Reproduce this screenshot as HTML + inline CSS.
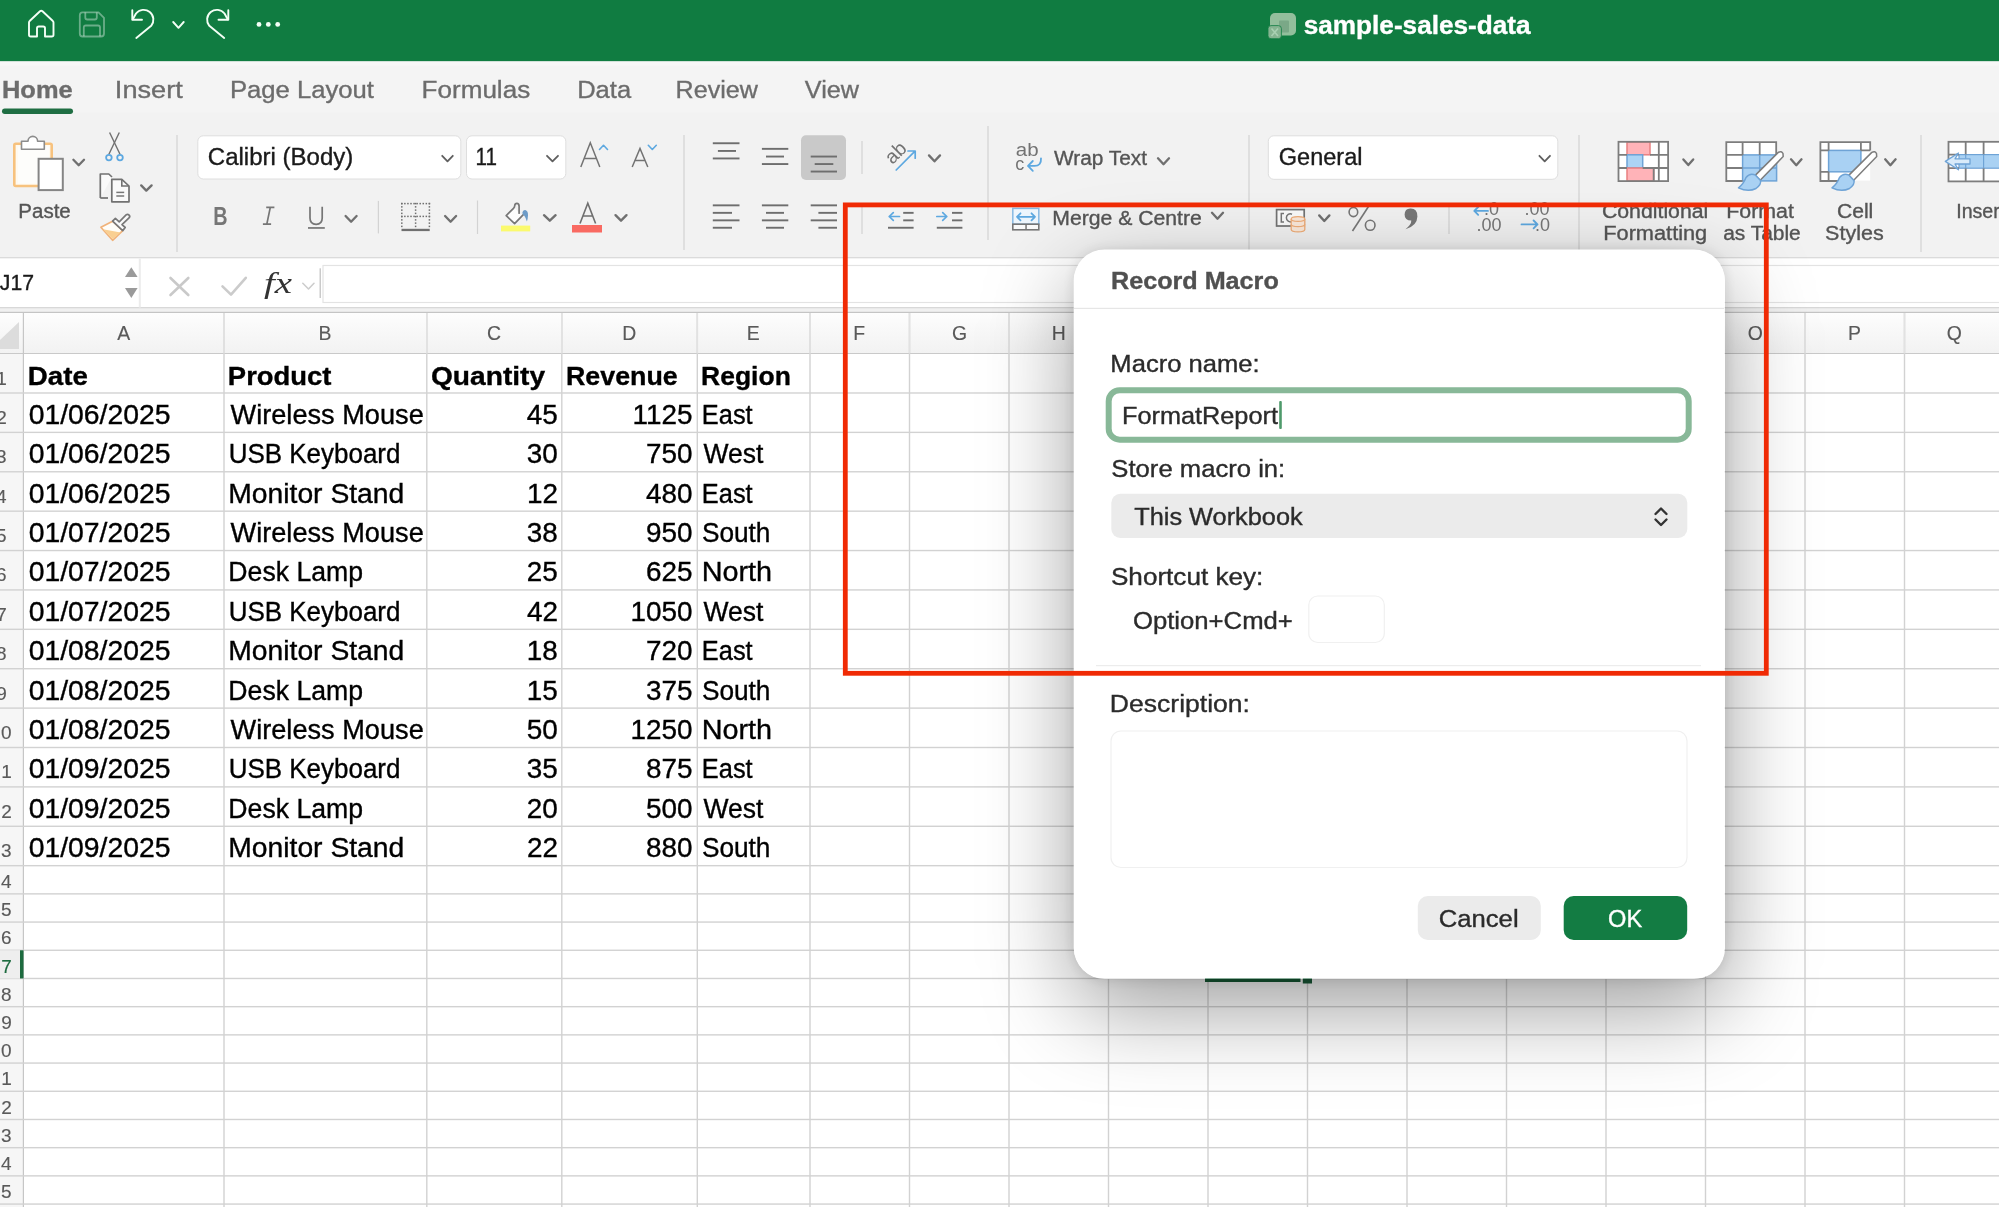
<!DOCTYPE html>
<html><head><meta charset="utf-8"><title>Record Macro</title>
<style>
html,body{margin:0;padding:0;width:1999px;height:1207px;overflow:hidden;background:#fff;font-family:"Liberation Sans",sans-serif;}
svg{position:absolute;left:0;top:0;will-change:transform;}
#shadow{position:absolute;left:1073.7px;top:249.5px;width:651px;height:729px;border-radius:31px;box-shadow:0 30px 90px rgba(0,0,0,0.38),0 0 14px rgba(0,0,0,0.12);}
#red{position:absolute;left:843px;top:203px;width:917.5px;height:464.5px;border:4.5px solid #ef2a0c;}
</style></head><body>
<svg width="1999" height="1207" viewBox="0 0 1999 1207">
<rect x="0" y="0" width="1999" height="61.8" fill="#107c41"/>
<rect x="0" y="61.5" width="1999" height="196.5" fill="#f2f2f2"/>
<rect x="0" y="61.5" width="1999" height="51" fill="#f4f4f4"/>
<rect x="0" y="61.8" width="1999" height="4" fill="#f7f7f7"/>
<rect x="0" y="257.3" width="1999" height="1.2" fill="#d2d2d2"/>
<rect x="0" y="258.5" width="1999" height="49" fill="#ffffff"/>
<rect x="0" y="307.3" width="1999" height="1.2" fill="#c8c8c8"/>
<rect x="0" y="308.5" width="1999" height="3.5" fill="#f0f0f0"/>
<rect x="0" y="311.8" width="1999" height="1.2" fill="#c4c4c4"/>
<defs><linearGradient id="hg" x1="0" y1="0" x2="0" y2="1"><stop offset="0" stop-color="#fdfdfd"/><stop offset="1" stop-color="#f2f2f2"/></linearGradient></defs>
<rect x="0" y="313" width="1999" height="40.3" fill="url(#hg)"/>
<rect x="0" y="353" width="1999" height="1.1" fill="#c9c9c9"/>
<rect x="23.5" y="354" width="1999" height="1207" fill="#ffffff"/>
<rect x="0" y="354" width="23.5" height="1207" fill="#f6f6f6"/>
<rect x="223.30" y="313" width="1.4" height="1207" fill="#d2d2d2"/>
<rect x="426.10" y="313" width="1.4" height="1207" fill="#d2d2d2"/>
<rect x="561.10" y="313" width="1.4" height="1207" fill="#d2d2d2"/>
<rect x="696.60" y="313" width="1.4" height="1207" fill="#d2d2d2"/>
<rect x="809.30" y="313" width="1.4" height="1207" fill="#d2d2d2"/>
<rect x="908.80" y="313" width="1.4" height="1207" fill="#d2d2d2"/>
<rect x="1008.30" y="313" width="1.4" height="1207" fill="#d2d2d2"/>
<rect x="1107.80" y="313" width="1.4" height="1207" fill="#d2d2d2"/>
<rect x="1207.30" y="313" width="1.4" height="1207" fill="#d2d2d2"/>
<rect x="1306.80" y="313" width="1.4" height="1207" fill="#d2d2d2"/>
<rect x="1406.30" y="313" width="1.4" height="1207" fill="#d2d2d2"/>
<rect x="1505.80" y="313" width="1.4" height="1207" fill="#d2d2d2"/>
<rect x="1605.30" y="313" width="1.4" height="1207" fill="#d2d2d2"/>
<rect x="1704.80" y="313" width="1.4" height="1207" fill="#d2d2d2"/>
<rect x="1804.30" y="313" width="1.4" height="1207" fill="#d2d2d2"/>
<rect x="1903.80" y="313" width="1.4" height="1207" fill="#d2d2d2"/>
<rect x="223.20" y="313" width="1.6" height="40.3" fill="#e2e2e2"/>
<rect x="426.00" y="313" width="1.6" height="40.3" fill="#e2e2e2"/>
<rect x="561.00" y="313" width="1.6" height="40.3" fill="#e2e2e2"/>
<rect x="696.50" y="313" width="1.6" height="40.3" fill="#e2e2e2"/>
<rect x="809.20" y="313" width="1.6" height="40.3" fill="#e2e2e2"/>
<rect x="908.70" y="313" width="1.6" height="40.3" fill="#e2e2e2"/>
<rect x="1008.20" y="313" width="1.6" height="40.3" fill="#e2e2e2"/>
<rect x="1107.70" y="313" width="1.6" height="40.3" fill="#e2e2e2"/>
<rect x="1207.20" y="313" width="1.6" height="40.3" fill="#e2e2e2"/>
<rect x="1306.70" y="313" width="1.6" height="40.3" fill="#e2e2e2"/>
<rect x="1406.20" y="313" width="1.6" height="40.3" fill="#e2e2e2"/>
<rect x="1505.70" y="313" width="1.6" height="40.3" fill="#e2e2e2"/>
<rect x="1605.20" y="313" width="1.6" height="40.3" fill="#e2e2e2"/>
<rect x="1704.70" y="313" width="1.6" height="40.3" fill="#e2e2e2"/>
<rect x="1804.20" y="313" width="1.6" height="40.3" fill="#e2e2e2"/>
<rect x="1903.70" y="313" width="1.6" height="40.3" fill="#e2e2e2"/>
<rect x="22.8" y="313" width="1.2" height="1207" fill="#c6c6c6"/>
<rect x="0" y="392.29" width="1999" height="1.4" fill="#d2d2d2"/>
<rect x="0" y="431.68" width="1999" height="1.4" fill="#d2d2d2"/>
<rect x="0" y="471.07" width="1999" height="1.4" fill="#d2d2d2"/>
<rect x="0" y="510.46" width="1999" height="1.4" fill="#d2d2d2"/>
<rect x="0" y="549.85" width="1999" height="1.4" fill="#d2d2d2"/>
<rect x="0" y="589.24" width="1999" height="1.4" fill="#d2d2d2"/>
<rect x="0" y="628.63" width="1999" height="1.4" fill="#d2d2d2"/>
<rect x="0" y="668.02" width="1999" height="1.4" fill="#d2d2d2"/>
<rect x="0" y="707.41" width="1999" height="1.4" fill="#d2d2d2"/>
<rect x="0" y="746.80" width="1999" height="1.4" fill="#d2d2d2"/>
<rect x="0" y="786.19" width="1999" height="1.4" fill="#d2d2d2"/>
<rect x="0" y="825.58" width="1999" height="1.4" fill="#d2d2d2"/>
<rect x="0" y="864.97" width="1999" height="1.4" fill="#d2d2d2"/>
<rect x="0" y="893.17" width="1999" height="1.4" fill="#d2d2d2"/>
<rect x="0" y="921.37" width="1999" height="1.4" fill="#d2d2d2"/>
<rect x="0" y="949.57" width="1999" height="1.4" fill="#d2d2d2"/>
<rect x="0" y="977.77" width="1999" height="1.4" fill="#d2d2d2"/>
<rect x="0" y="1005.97" width="1999" height="1.4" fill="#d2d2d2"/>
<rect x="0" y="1034.17" width="1999" height="1.4" fill="#d2d2d2"/>
<rect x="0" y="1062.37" width="1999" height="1.4" fill="#d2d2d2"/>
<rect x="0" y="1090.57" width="1999" height="1.4" fill="#d2d2d2"/>
<rect x="0" y="1118.77" width="1999" height="1.4" fill="#d2d2d2"/>
<rect x="0" y="1146.97" width="1999" height="1.4" fill="#d2d2d2"/>
<rect x="0" y="1175.17" width="1999" height="1.4" fill="#d2d2d2"/>
<rect x="0" y="1203.37" width="1999" height="1.4" fill="#d2d2d2"/>
<rect x="0" y="1231.57" width="1999" height="1.4" fill="#d2d2d2"/>
<rect x="0" y="1259.77" width="1999" height="1.4" fill="#d2d2d2"/>
<path d="M19 322 L19 349 L0 349 L0 340 Z" fill="#dcdcdc"/>
<rect x="0" y="950.27" width="23" height="28.20" fill="#eeeeee"/>
<rect x="20" y="950.27" width="3.5" height="28.20" fill="#1d6b3f"/>
<rect x="1205" y="978" width="95.5" height="4" fill="#165c36"/>
<rect x="1302.8" y="978" width="9.2" height="5.5" fill="#1b5e3a"/>
<rect x="2" y="108.5" width="71" height="5.5" rx="2.75" fill="#1f6e43"/>
<path d="M37 36.5 V28.3 Q37 26.5 38.8 26.5 H43.2 Q45 26.5 45 28.3 V36.5 H51.7 Q53.5 36.5 53.5 34.7 V22.6 Q53.5 21.5 52.6 20.7 L42.5 11.2 Q41.25 10.1 40 11.2 L29.9 20.7 Q29 21.5 29 22.6 V34.7 Q29 36.5 30.8 36.5 Z" fill="none" stroke="#f4fff6" stroke-width="1.9" stroke-linejoin="round"/>
<g fill="none" stroke="rgba(255,255,255,0.38)" stroke-width="1.8" stroke-linejoin="round"><path d="M82.5 12.3 H98.5 L104 17.8 V33.5 Q104 36.5 101 36.5 H82.5 Q79.8 36.5 79.8 33.5 V15.3 Q79.8 12.3 82.5 12.3 Z"/><path d="M85.3 12.5 V17.5 Q85.3 19.5 87.3 19.5 H94.8 Q96.8 19.5 96.8 17.5 V12.5"/><path d="M83.8 36.3 V27.5 Q83.8 25.5 85.8 25.5 H98 Q100 25.5 100 27.5 V36.3"/></g>
<g fill="none" stroke="#f4fff6" stroke-width="1.9" stroke-linecap="round" stroke-linejoin="round"><path d="M136.3 38 L151.2 25.8 A9.3 9.3 0 1 0 136 13.5 L132.8 19.2"/><path d="M132.3 10.2 V19.7 H142"/><path d="M173.2 22 L178.5 27.8 L183.7 22"/><path d="M224.2 38 L209.3 25.8 A9.3 9.3 0 1 1 224.5 13.5 L227.7 19.2"/><path d="M228.3 10.2 V19.7 H218.5"/></g>
<circle cx="259" cy="24.4" r="2.4" fill="#f4fff6"/>
<circle cx="268.3" cy="24.4" r="2.4" fill="#f4fff6"/>
<circle cx="277.7" cy="24.4" r="2.4" fill="#f4fff6"/>
<rect x="1270" y="13.1" width="26" height="22.4" rx="5" fill="#93bf9c"/><rect x="1279" y="20.5" width="10" height="12" rx="1" fill="#7aa887"/><rect x="1268" y="25.6" width="13.4" height="13.1" rx="3" fill="#86b491" stroke="#107c41" stroke-width="0.8"/><path d="M1271.5 28.5 L1278 36 M1278 28.5 L1271.5 36" stroke="#a9d0b2" stroke-width="1.6"/>
<rect x="176.4" y="135" width="1.2" height="117" fill="#d3d3d3"/>
<rect x="377.79999999999995" y="200.9" width="1.2" height="32.5" fill="#d3d3d3"/>
<rect x="476.9" y="200.5" width="1.2" height="33.5" fill="#d3d3d3"/>
<rect x="683.4" y="135" width="1.2" height="115" fill="#d3d3d3"/>
<rect x="861.4" y="141" width="1.2" height="33" fill="#d3d3d3"/>
<rect x="861.4" y="203" width="1.2" height="31" fill="#d3d3d3"/>
<rect x="987.4" y="126" width="1.2" height="114" fill="#d3d3d3"/>
<rect x="1248.4" y="135" width="1.2" height="115" fill="#d3d3d3"/>
<rect x="1448.4" y="207" width="1.2" height="27" fill="#d3d3d3"/>
<rect x="1578.4" y="135" width="1.2" height="115" fill="#d3d3d3"/>
<rect x="1920.4" y="135" width="1.2" height="117" fill="#d3d3d3"/>
<rect x="14.3" y="143.8" width="37.4" height="42.2" rx="1.5" fill="#fffaf0" stroke="#f7c27e" stroke-width="2.6"/>
<rect x="18" y="146.5" width="31" height="37" fill="#fdfdfb"/>
<path d="M21.5 141.2 H28 A4.8 4.8 0 0 1 37.6 141.2 H44.3 V149.2 H21.5 Z" fill="#fff" stroke="#8c8c8c" stroke-width="1.6" stroke-linejoin="round"/>
<rect x="38.6" y="158.8" width="24.2" height="31.3" fill="#ffffff" stroke="#858585" stroke-width="2"/>
<path d="M73.4 159.8 L78.7 165.2 L84 159.8" fill="none" stroke="#707070" stroke-width="2.35" stroke-linecap="round" stroke-linejoin="round"/>
<g stroke="#6f6f6f" stroke-width="1.4" fill="none"><path d="M109.6 132.5 L120 154.2"/><path d="M119.3 132.5 L108.9 154.2"/></g>
<g stroke="#5da8e0" stroke-width="1.8" fill="none"><circle cx="108.9" cy="157.6" r="2.8"/><circle cx="120" cy="157.6" r="2.8"/></g>
<g fill="#fafafa" stroke="#727272" stroke-width="1.7" stroke-linejoin="round"><path d="M100.3 198 V174 H108.8 L112 177"/><path d="M100.3 198 H108"/><path d="M111.8 201.8 V179.3 H121.8 L129 186 V201.8 Z"/></g>
<path d="M121.8 179.5 V186 H128.8" fill="none" stroke="#727272" stroke-width="1.6"/>
<g stroke="#777" stroke-width="1.5"><path d="M116.3 192.4 H124.2"/><path d="M116.3 196 H124.2"/></g>
<path d="M141.2 185.4 L146.3 190.6 L151.6 185.4" fill="none" stroke="#707070" stroke-width="2.35" stroke-linecap="round" stroke-linejoin="round"/>
<path d="M112.6 221.2 L100.9 227.2 L112.6 240.3 L122.7 230.6 Z" fill="#fffdf8" stroke="#f0b27a" stroke-width="1.7" stroke-linejoin="round"/>
<path d="M103 229.2 L120.6 232.6 L112.6 239 Z" fill="#f9cf92"/>
<path d="M112.6 221.2 L115.4 218.4 L119.2 221.8 L126.1 214.9 Q127.6 213.6 129.1 215.1 Q130.4 216.5 129 217.9 L122 224.6 L125.2 227.5 L122.7 230.6 Z" fill="#fafafa" stroke="#777" stroke-width="1.7" stroke-linejoin="round"/>
<rect x="197.8" y="135.8" width="263" height="43.2" rx="5.5" fill="#fff" stroke="#dedede" stroke-width="1"/>
<path d="M442.2 155.8 L447.5 161.4 L452.8 155.8" fill="none" stroke="#5f5f5f" stroke-width="1.8" stroke-linecap="round" stroke-linejoin="round"/>
<rect x="466.5" y="135.8" width="99.3" height="43.2" rx="5.5" fill="#fff" stroke="#dedede" stroke-width="1"/>
<path d="M547 155.8 L552.5 161.4 L558 155.8" fill="none" stroke="#5f5f5f" stroke-width="1.8" stroke-linecap="round" stroke-linejoin="round"/>
<g fill="none" stroke="#737373" stroke-width="1.5" stroke-linejoin="miter"><path d="M580.8 167 L590.3 142.8 L599.8 167 M584.2 158.6 H596.4"/><path d="M632.2 167 L640 148.4 L647.8 167 M635 160.5 H645"/></g>
<path d="M599.5 149.5 L603.5 145.3 L607.5 149.5" fill="none" stroke="#5da8e0" stroke-width="1.6" stroke-linecap="round" stroke-linejoin="round"/>
<path d="M648.3 145.3 L652.3 149.5 L656.3 145.3" fill="none" stroke="#5da8e0" stroke-width="1.6" stroke-linecap="round" stroke-linejoin="round"/>
<text x="213.2" y="224.9" font-family="Liberation Sans" font-weight="bold" font-size="25.5" fill="#767676" textLength="14.3" lengthAdjust="spacingAndGlyphs">B</text>
<path d="M266.2 207.4 H274.4 M262.9 224.2 H271.1 M270.3 207.4 L266.8 224.2" fill="none" stroke="#767676" stroke-width="1.7"/>
<path d="M310 206.7 V218 Q310 224.3 316.1 224.3 Q322.2 224.3 322.2 218 V206.7" fill="none" stroke="#767676" stroke-width="1.7"/>
<rect x="308" y="227.1" width="16.8" height="1.7" fill="#767676"/>
<path d="M345.6 216 L351.1 221.7 L356.6 216" fill="none" stroke="#707070" stroke-width="2.35" stroke-linecap="round" stroke-linejoin="round"/>
<g fill="#6f6f6f"><rect x="401.05" y="202.85" width="1.5" height="1.5"/><rect x="404.12" y="202.85" width="1.5" height="1.5"/><rect x="407.18" y="202.85" width="1.5" height="1.5"/><rect x="410.25" y="202.85" width="1.5" height="1.5"/><rect x="413.32" y="202.85" width="1.5" height="1.5"/><rect x="416.38" y="202.85" width="1.5" height="1.5"/><rect x="419.45" y="202.85" width="1.5" height="1.5"/><rect x="422.52" y="202.85" width="1.5" height="1.5"/><rect x="425.58" y="202.85" width="1.5" height="1.5"/><rect x="428.65" y="202.85" width="1.5" height="1.5"/><rect x="401.05" y="202.85" width="1.5" height="1.5"/><rect x="401.05" y="206.11" width="1.5" height="1.5"/><rect x="401.05" y="209.36" width="1.5" height="1.5"/><rect x="401.05" y="212.62" width="1.5" height="1.5"/><rect x="401.05" y="215.88" width="1.5" height="1.5"/><rect x="401.05" y="219.14" width="1.5" height="1.5"/><rect x="401.05" y="222.39" width="1.5" height="1.5"/><rect x="401.05" y="225.65" width="1.5" height="1.5"/><rect x="428.65" y="202.85" width="1.5" height="1.5"/><rect x="428.65" y="206.11" width="1.5" height="1.5"/><rect x="428.65" y="209.36" width="1.5" height="1.5"/><rect x="428.65" y="212.62" width="1.5" height="1.5"/><rect x="428.65" y="215.88" width="1.5" height="1.5"/><rect x="428.65" y="219.14" width="1.5" height="1.5"/><rect x="428.65" y="222.39" width="1.5" height="1.5"/><rect x="428.65" y="225.65" width="1.5" height="1.5"/><rect x="401.05" y="215.65" width="1.5" height="1.5"/><rect x="404.12" y="215.65" width="1.5" height="1.5"/><rect x="407.18" y="215.65" width="1.5" height="1.5"/><rect x="410.25" y="215.65" width="1.5" height="1.5"/><rect x="413.32" y="215.65" width="1.5" height="1.5"/><rect x="416.38" y="215.65" width="1.5" height="1.5"/><rect x="419.45" y="215.65" width="1.5" height="1.5"/><rect x="422.52" y="215.65" width="1.5" height="1.5"/><rect x="425.58" y="215.65" width="1.5" height="1.5"/><rect x="428.65" y="215.65" width="1.5" height="1.5"/><rect x="414.85" y="202.85" width="1.5" height="1.5"/><rect x="414.85" y="206.11" width="1.5" height="1.5"/><rect x="414.85" y="209.36" width="1.5" height="1.5"/><rect x="414.85" y="212.62" width="1.5" height="1.5"/><rect x="414.85" y="215.88" width="1.5" height="1.5"/><rect x="414.85" y="219.14" width="1.5" height="1.5"/><rect x="414.85" y="222.39" width="1.5" height="1.5"/><rect x="414.85" y="225.65" width="1.5" height="1.5"/></g>
<rect x="401.5" y="228.8" width="28.2" height="2.3" fill="#707070"/>
<path d="M445.1 216 L450.6 221.7 L456.1 216" fill="none" stroke="#707070" stroke-width="2.35" stroke-linecap="round" stroke-linejoin="round"/>
<path d="M514.6 207.6 L506.2 215.6 L514.6 223.6 L523.3 214.8 L519.1 213.2 Z" fill="#fdfdfd"/>
<path d="M519.1 213.2 V206.2 Q519 203.3 516.9 203.3 Q514.9 203.3 514.7 205.8 Q514.6 207.3 513.5 208.3 L506.2 215.6 L514.6 223.6 L523.3 214.6" fill="none" stroke="#777" stroke-width="1.7" stroke-linejoin="round" stroke-linecap="round"/>
<path d="M522.4 212.6 Q522.8 209.8 525.3 210.1 Q528.2 210.9 528 215.5 Q527.8 219 526.9 221.6 Q525.8 217.6 524.3 215.7 Q522.2 214.9 522.4 212.6 Z" fill="#6e9cc8"/>
<rect x="501" y="225.6" width="29.2" height="5.8" fill="#fbfa6e"/>
<path d="M544 215.2 L549.8 220.7 L555.6 215.2" fill="none" stroke="#707070" stroke-width="2.35" stroke-linecap="round" stroke-linejoin="round"/>
<path d="M580 223.5 L587.8 203.3 L595.6 223.5 M583 216 H592.6" fill="none" stroke="#6f6f6f" stroke-width="1.6"/>
<rect x="572" y="225" width="30" height="7.5" fill="#f96a62"/>
<path d="M615.5 215.2 L621 220.7 L626.5 215.2" fill="none" stroke="#707070" stroke-width="2.35" stroke-linecap="round" stroke-linejoin="round"/>
<rect x="801" y="135.2" width="45" height="44.8" rx="5" fill="#c9c9c9"/>
<rect x="712.8" y="142.29999999999998" width="26.700000000000045" height="1.9" fill="#6e6e6e"/>
<rect x="717.9" y="150.0" width="18.100000000000023" height="1.9" fill="#6e6e6e"/>
<rect x="712.8" y="157.5" width="26.700000000000045" height="1.9" fill="#6e6e6e"/>
<rect x="761.9" y="147.9" width="26.399999999999977" height="1.9" fill="#6e6e6e"/>
<rect x="766" y="155.6" width="18" height="1.9" fill="#6e6e6e"/>
<rect x="761.9" y="163.1" width="26.399999999999977" height="1.9" fill="#6e6e6e"/>
<rect x="810.7" y="155.6" width="26.299999999999955" height="1.9" fill="#6e6e6e"/>
<rect x="814.7" y="163.1" width="18.59999999999991" height="1.9" fill="#6e6e6e"/>
<rect x="810.7" y="170.6" width="26.299999999999955" height="1.9" fill="#6e6e6e"/>
<rect x="712.8" y="204.4" width="26.700000000000045" height="1.9" fill="#6e6e6e"/>
<rect x="712.8" y="211.9" width="19.200000000000045" height="1.9" fill="#6e6e6e"/>
<rect x="712.8" y="219.4" width="26.700000000000045" height="1.9" fill="#6e6e6e"/>
<rect x="712.8" y="226.79999999999998" width="19.200000000000045" height="1.9" fill="#6e6e6e"/>
<rect x="761.9" y="204.4" width="26.399999999999977" height="1.9" fill="#6e6e6e"/>
<rect x="766" y="211.9" width="18" height="1.9" fill="#6e6e6e"/>
<rect x="761.9" y="219.4" width="26.399999999999977" height="1.9" fill="#6e6e6e"/>
<rect x="766" y="226.79999999999998" width="18" height="1.9" fill="#6e6e6e"/>
<rect x="810.7" y="204.4" width="26.299999999999955" height="1.9" fill="#6e6e6e"/>
<rect x="818.4" y="211.9" width="18.600000000000023" height="1.9" fill="#6e6e6e"/>
<rect x="810.7" y="219.4" width="26.299999999999955" height="1.9" fill="#6e6e6e"/>
<rect x="818.4" y="226.79999999999998" width="18.600000000000023" height="1.9" fill="#6e6e6e"/>
<text x="0" y="0" transform="translate(892.5 165) rotate(-45)" font-family="Liberation Sans" font-size="19.5" fill="#727272">ab</text>
<path d="M896.2 170 L915 151.2 M908 151 H915.2 V158.2" fill="none" stroke="#5da8e0" stroke-width="1.7" stroke-linecap="round" stroke-linejoin="round"/>
<path d="M929 155.4 L934.5 161.3 L940 155.4" fill="none" stroke="#707070" stroke-width="2.35" stroke-linecap="round" stroke-linejoin="round"/>
<rect x="903.2" y="211.9" width="10.399999999999977" height="1.9" fill="#6e6e6e"/>
<rect x="903.2" y="219.4" width="10.399999999999977" height="1.9" fill="#6e6e6e"/>
<rect x="888" y="226.79999999999998" width="25.600000000000023" height="1.9" fill="#6e6e6e"/>
<rect x="952" y="211.9" width="10.399999999999977" height="1.9" fill="#6e6e6e"/>
<rect x="952" y="219.4" width="10.399999999999977" height="1.9" fill="#6e6e6e"/>
<rect x="936.8" y="226.79999999999998" width="25.600000000000023" height="1.9" fill="#6e6e6e"/>
<path d="M899.5 216.5 H889.2 M893.3 212.6 L889.2 216.5 L893.3 220.4" fill="none" stroke="#5da8e0" stroke-width="1.7" stroke-linecap="round" stroke-linejoin="round"/>
<path d="M936.8 216.5 H946.8 M942.7 212.6 L946.8 216.5 L942.7 220.4" fill="none" stroke="#5da8e0" stroke-width="1.7" stroke-linecap="round" stroke-linejoin="round"/>
<text x="1015.8" y="155.9" font-family="Liberation Sans" font-size="17.5" fill="#737373" textLength="22.8" lengthAdjust="spacingAndGlyphs">ab</text>
<text x="1015.2" y="170.4" font-family="Liberation Sans" font-size="18" fill="#737373">c</text>
<path d="M1041 158.3 Q1041.5 165.9 1034.5 165.9 H1028 M1032.8 161 L1028 165.9 L1032.8 170.8" fill="none" stroke="#5da8e0" stroke-width="1.8" stroke-linecap="round" stroke-linejoin="round"/>
<rect x="1012.8" y="208.4" width="26" height="15.8" fill="#eef6fd" stroke="#86b9e3" stroke-width="1.5"/>
<rect x="1012.8" y="224.2" width="26" height="5.6" fill="#fafafa" stroke="#777" stroke-width="1.6"/>
<rect x="1025.3" y="224.2" width="1.5" height="5.6" fill="#777"/>
<path d="M1017 216.8 H1035 M1020.5 213.3 L1017 216.8 L1020.5 220.3 M1031.5 213.3 L1035 216.8 L1031.5 220.3" fill="none" stroke="#5da8e0" stroke-width="1.8" stroke-linecap="round" stroke-linejoin="round"/>
<rect x="1268.3" y="135.8" width="289.5" height="43.5" rx="5.5" fill="#fff" stroke="#dedede" stroke-width="1"/>
<path d="M1539.4 155.8 L1544.7 161.4 L1550 155.8" fill="none" stroke="#5f5f5f" stroke-width="1.8" stroke-linecap="round" stroke-linejoin="round"/>
<rect x="1276.6" y="209.6" width="27.6" height="16.4" fill="#fafafa" stroke="#737373" stroke-width="1.7"/>
<path d="M1284 213.5 H1281.3 V222 H1284" fill="none" stroke="#777" stroke-width="1.5"/>
<path d="M1292 214.2 A4 4 0 1 0 1292 221.5" fill="none" stroke="#777" stroke-width="1.5"/>
<g fill="#fbe9da" stroke="#f0ad78" stroke-width="1.3"><path d="M1291.2 219 V229.5 A6.8 2.4 0 0 0 1304.8 229.5 V219"/><ellipse cx="1298" cy="219" rx="6.8" ry="2.4"/><path d="M1291.2 224.2 A6.8 2.4 0 0 0 1304.8 224.2" fill="none"/></g>
<path d="M1319.2 215.4 L1324.3 221 L1329.4 215.4" fill="none" stroke="#707070" stroke-width="2.35" stroke-linecap="round" stroke-linejoin="round"/>
<path d="M1158 158.3 L1163.5 164.2 L1169 158.3" fill="none" stroke="#707070" stroke-width="2.35" stroke-linecap="round" stroke-linejoin="round"/>
<path d="M1212 212.8 L1217.5 218.7 L1223 212.8" fill="none" stroke="#707070" stroke-width="2.35" stroke-linecap="round" stroke-linejoin="round"/>
<g fill="none" stroke="#777" stroke-width="1.6"><ellipse cx="1353.4" cy="212" rx="4.3" ry="4.6"/><ellipse cx="1370.2" cy="225.3" rx="4.8" ry="5"/><path d="M1352.5 231 L1368.5 206.5"/></g>
<path d="M1410.2 208.6 Q1417.4 208.2 1417.4 216.5 Q1417.2 225.8 1405.5 229.3 Q1411.5 224.5 1411.3 220.6 Q1404.6 220.4 1404.6 214.5 Q1404.8 208.8 1410.2 208.6 Z" fill="#777"/>
<g font-family="Liberation Sans" font-size="18" fill="#767676"><text x="1484" y="215.4">.0</text><text x="1476.5" y="230.7">.00</text><text x="1524.5" y="215.4">.00</text><text x="1535" y="230.7">.0</text></g>
<path d="M1488 210.9 H1474.3 M1478.2 207 L1474.3 210.9 L1478.2 214.8" fill="none" stroke="#5da8e0" stroke-width="1.8" stroke-linecap="round" stroke-linejoin="round"/>
<path d="M1521.5 224.4 H1537.5 M1533.6 220.5 L1537.5 224.4 L1533.6 228.3" fill="none" stroke="#5da8e0" stroke-width="1.8" stroke-linecap="round" stroke-linejoin="round"/>
<rect x="1618.5" y="141.8" width="49.6" height="39" fill="#fff"/>
<rect x="1627" y="142" width="23" height="12.8" fill="#ffb3b8" stroke="#e98080" stroke-width="1.5"/>
<rect x="1627" y="154.8" width="15.7" height="13.2" fill="#acd4f5" stroke="#6ea3d6" stroke-width="1.5"/>
<rect x="1627" y="168" width="26.7" height="13" fill="#ffb3b8" stroke="#e98080" stroke-width="1.5"/>
<g fill="none" stroke="#7d7d7d" stroke-width="1.8"><rect x="1618.5" y="141.8" width="49.6" height="39.3"/><path d="M1618.5 154.8 H1627 M1650 154.8 H1668 M1618.5 168 H1627 M1642.7 168 H1668 M1658.8 141.8 V181 M1653.7 168 V181"/></g>
<path d="M1683.4 159.5 L1688.3 165 L1693.2 159.5" fill="none" stroke="#707070" stroke-width="2.35" stroke-linecap="round" stroke-linejoin="round"/>
<rect x="1726.3" y="142.2" width="49.8" height="38.4" fill="#fff"/>
<rect x="1742.6" y="154.9" width="34" height="26" fill="#a9d1f3" stroke="#6ea3d6" stroke-width="1.5"/>
<g fill="none" stroke="#7d7d7d" stroke-width="1.8"><path d="M1742.6 181 H1726.3 V142.2 H1776.2 V154.9 M1726.3 154.9 H1742.6 M1726.3 168 H1742.6 M1742.6 142.2 V154.9 M1759.7 142.2 V154.9"/></g>
<g fill="none" stroke="#6ea3d6" stroke-width="1.5"><path d="M1742.6 168 H1776.6 M1759.7 154.9 V181"/></g>
<g transform="translate(0 0)"><path d="M1778.3 152.4 Q1781.5 150.5 1783 153.5 L1783.2 156.6 L1760.2 180.2 L1755.2 175.4 Z" fill="#fff" stroke="#7d7d7d" stroke-width="1.5" stroke-linejoin="round"/><path d="M1755.5 175.2 Q1750 172.5 1746 177.5 Q1743.5 184 1738.5 187.8 Q1748 192.5 1756 188.5 Q1761.5 184.5 1760.5 180.5 Z" fill="#a9d1f3" stroke="#6ea3d6" stroke-width="1.5" stroke-linejoin="round"/></g>
<path d="M1791 159.3 L1796.3 165.2 L1801.5 159.3" fill="none" stroke="#707070" stroke-width="2.35" stroke-linecap="round" stroke-linejoin="round"/>
<rect x="1820.4" y="142.2" width="49.8" height="38.4" fill="#fff"/>
<rect x="1828.6" y="150.4" width="32.3" height="21.4" fill="#a9d1f3" stroke="#6ea3d6" stroke-width="1.5"/>
<g fill="none" stroke="#7d7d7d" stroke-width="1.8"><path d="M1840 181 H1820.4 V142.2 H1870.2 V150.4 M1820.4 150.4 H1828.6 M1860.9 150.4 H1870.2 M1820.4 171.8 H1828.6 M1828.6 142.2 V150.4 M1860.9 142.2 V150.4 M1828.6 171.8 V181"/></g>
<g transform="translate(93.5 0)"><path d="M1778.3 152.4 Q1781.5 150.5 1783 153.5 L1783.2 156.6 L1760.2 180.2 L1755.2 175.4 Z" fill="#fff" stroke="#7d7d7d" stroke-width="1.5" stroke-linejoin="round"/><path d="M1755.5 175.2 Q1750 172.5 1746 177.5 Q1743.5 184 1738.5 187.8 Q1748 192.5 1756 188.5 Q1761.5 184.5 1760.5 180.5 Z" fill="#a9d1f3" stroke="#6ea3d6" stroke-width="1.5" stroke-linejoin="round"/></g>
<path d="M1885.2 159.3 L1890.4 165.2 L1895.6 159.3" fill="none" stroke="#707070" stroke-width="2.35" stroke-linecap="round" stroke-linejoin="round"/>
<rect x="1948.5" y="141.8" width="60" height="39.6" fill="#fff" stroke="#7d7d7d" stroke-width="1.8"/>
<rect x="1959" y="154.6" width="50" height="13.6" fill="#a9d1f3" stroke="#6ea3d6" stroke-width="1.2"/>
<g fill="none" stroke="#7d7d7d" stroke-width="1.8"><path d="M1948.5 154.6 H1959 M1948.5 168.2 H1959 M1965.7 141.8 V154.6 M1965.7 168.2 V181.4 M1983.6 141.8 V154.6 M1983.6 168.2 V181.4"/></g>
<g fill="none" stroke="#6ea3d6" stroke-width="1.2"><path d="M1983.6 154.6 V168.2 M1965.7 154.6 V168.2"/></g>
<path d="M1970 158.8 H1955 L1958.5 153 L1945.3 161.4 L1958.5 169.8 L1955 164 H1970 Z" fill="#d9ebfa" stroke="#6ea3d6" stroke-width="1.3" stroke-linejoin="round"/>
<rect x="138.8" y="258.5" width="2" height="49" fill="#ececec"/>
<path d="M125 277 L131.3 267.2 L137.6 277 Z" fill="#9a9a9a"/>
<path d="M125 288 L131.3 298 L137.6 288 Z" fill="#9a9a9a"/>
<path d="M170.5 278 L188.3 295 M188.3 278 L170.5 295" stroke="#c9c9c9" stroke-width="2.6" stroke-linecap="round"/>
<path d="M222.5 286.4 L231 294.6 L245.8 277.8" fill="none" stroke="#cbcbcb" stroke-width="2.6" stroke-linecap="round" stroke-linejoin="round"/>
<text x="264" y="292.5" font-family="Liberation Serif" font-style="italic" font-size="29" fill="#333" textLength="28" lengthAdjust="spacingAndGlyphs">fx</text>
<path d="M302.8 283.3 L308.5 289 L314 283.3" fill="none" stroke="#cdcdcd" stroke-width="1.6" stroke-linecap="round" stroke-linejoin="round"/>
<rect x="319.6" y="268.3" width="1.2" height="29.7" fill="#bdbdbd"/>
<rect x="323" y="265.5" width="1700" height="37" fill="#fff" stroke="#e3e3e3" stroke-width="1.2"/>
<text x="117.15" y="339.70" font-size="19.4" font-weight="normal" font-style="normal" font-family="Liberation Sans" fill="#5a5a5a" textLength="12.94" lengthAdjust="spacingAndGlyphs" stroke="#5a5a5a" stroke-width="0.15" >A</text>
<text x="318.61" y="339.70" font-size="19.4" font-weight="normal" font-style="normal" font-family="Liberation Sans" fill="#5a5a5a" textLength="12.94" lengthAdjust="spacingAndGlyphs" stroke="#5a5a5a" stroke-width="0.15" >B</text>
<text x="487.12" y="339.70" font-size="19.4" font-weight="normal" font-style="normal" font-family="Liberation Sans" fill="#5a5a5a" textLength="14.01" lengthAdjust="spacingAndGlyphs" stroke="#5a5a5a" stroke-width="0.15" >C</text>
<text x="622.18" y="339.70" font-size="19.4" font-weight="normal" font-style="normal" font-family="Liberation Sans" fill="#5a5a5a" textLength="14.01" lengthAdjust="spacingAndGlyphs" stroke="#5a5a5a" stroke-width="0.15" >D</text>
<text x="746.76" y="339.70" font-size="19.4" font-weight="normal" font-style="normal" font-family="Liberation Sans" fill="#5a5a5a" textLength="12.94" lengthAdjust="spacingAndGlyphs" stroke="#5a5a5a" stroke-width="0.15" >E</text>
<text x="853.35" y="339.70" font-size="19.4" font-weight="normal" font-style="normal" font-family="Liberation Sans" fill="#5a5a5a" textLength="11.85" lengthAdjust="spacingAndGlyphs" stroke="#5a5a5a" stroke-width="0.15" >F</text>
<text x="951.88" y="339.70" font-size="19.4" font-weight="normal" font-style="normal" font-family="Liberation Sans" fill="#5a5a5a" textLength="15.09" lengthAdjust="spacingAndGlyphs" stroke="#5a5a5a" stroke-width="0.15" >G</text>
<text x="1051.67" y="339.70" font-size="19.4" font-weight="normal" font-style="normal" font-family="Liberation Sans" fill="#5a5a5a" textLength="14.01" lengthAdjust="spacingAndGlyphs" stroke="#5a5a5a" stroke-width="0.15" >H</text>
<text x="1155.53" y="339.70" font-size="19.4" font-weight="normal" font-style="normal" font-family="Liberation Sans" fill="#5a5a5a" textLength="5.39" lengthAdjust="spacingAndGlyphs" stroke="#5a5a5a" stroke-width="0.15" >I</text>
<text x="1253.48" y="339.70" font-size="19.4" font-weight="normal" font-style="normal" font-family="Liberation Sans" fill="#5a5a5a" textLength="9.70" lengthAdjust="spacingAndGlyphs" stroke="#5a5a5a" stroke-width="0.15" >J</text>
<text x="1350.07" y="339.70" font-size="19.4" font-weight="normal" font-style="normal" font-family="Liberation Sans" fill="#5a5a5a" textLength="12.94" lengthAdjust="spacingAndGlyphs" stroke="#5a5a5a" stroke-width="0.15" >K</text>
<text x="1450.83" y="339.70" font-size="19.4" font-weight="normal" font-style="normal" font-family="Liberation Sans" fill="#5a5a5a" textLength="10.79" lengthAdjust="spacingAndGlyphs" stroke="#5a5a5a" stroke-width="0.15" >L</text>
<text x="1548.10" y="339.70" font-size="19.4" font-weight="normal" font-style="normal" font-family="Liberation Sans" fill="#5a5a5a" textLength="16.16" lengthAdjust="spacingAndGlyphs" stroke="#5a5a5a" stroke-width="0.15" >M</text>
<text x="1648.67" y="339.70" font-size="19.4" font-weight="normal" font-style="normal" font-family="Liberation Sans" fill="#5a5a5a" textLength="14.01" lengthAdjust="spacingAndGlyphs" stroke="#5a5a5a" stroke-width="0.15" >N</text>
<text x="1747.78" y="339.70" font-size="19.4" font-weight="normal" font-style="normal" font-family="Liberation Sans" fill="#5a5a5a" textLength="15.09" lengthAdjust="spacingAndGlyphs" stroke="#5a5a5a" stroke-width="0.15" >O</text>
<text x="1847.96" y="339.70" font-size="19.4" font-weight="normal" font-style="normal" font-family="Liberation Sans" fill="#5a5a5a" textLength="12.94" lengthAdjust="spacingAndGlyphs" stroke="#5a5a5a" stroke-width="0.15" >P</text>
<text x="1946.78" y="339.70" font-size="19.4" font-weight="normal" font-style="normal" font-family="Liberation Sans" fill="#5a5a5a" textLength="15.09" lengthAdjust="spacingAndGlyphs" stroke="#5a5a5a" stroke-width="0.15" >Q</text>
<text x="-3.69" y="384.50" font-size="19" font-weight="normal" font-style="normal" font-family="Liberation Sans" fill="#5a5a5a" textLength="10.57" lengthAdjust="spacingAndGlyphs" stroke="#5a5a5a" stroke-width="0.15" >1</text>
<text x="-3.69" y="423.89" font-size="19" font-weight="normal" font-style="normal" font-family="Liberation Sans" fill="#5a5a5a" textLength="10.57" lengthAdjust="spacingAndGlyphs" stroke="#5a5a5a" stroke-width="0.15" >2</text>
<text x="-3.88" y="463.28" font-size="19" font-weight="normal" font-style="normal" font-family="Liberation Sans" fill="#5a5a5a" textLength="10.57" lengthAdjust="spacingAndGlyphs" stroke="#5a5a5a" stroke-width="0.15" >3</text>
<text x="-4.07" y="502.67" font-size="19" font-weight="normal" font-style="normal" font-family="Liberation Sans" fill="#5a5a5a" textLength="10.57" lengthAdjust="spacingAndGlyphs" stroke="#5a5a5a" stroke-width="0.15" >4</text>
<text x="-3.88" y="542.06" font-size="19" font-weight="normal" font-style="normal" font-family="Liberation Sans" fill="#5a5a5a" textLength="10.57" lengthAdjust="spacingAndGlyphs" stroke="#5a5a5a" stroke-width="0.15" >5</text>
<text x="-3.88" y="581.45" font-size="19" font-weight="normal" font-style="normal" font-family="Liberation Sans" fill="#5a5a5a" textLength="10.57" lengthAdjust="spacingAndGlyphs" stroke="#5a5a5a" stroke-width="0.15" >6</text>
<text x="-3.69" y="620.84" font-size="19" font-weight="normal" font-style="normal" font-family="Liberation Sans" fill="#5a5a5a" textLength="10.57" lengthAdjust="spacingAndGlyphs" stroke="#5a5a5a" stroke-width="0.15" >7</text>
<text x="-3.88" y="660.23" font-size="19" font-weight="normal" font-style="normal" font-family="Liberation Sans" fill="#5a5a5a" textLength="10.57" lengthAdjust="spacingAndGlyphs" stroke="#5a5a5a" stroke-width="0.15" >8</text>
<text x="-3.69" y="699.62" font-size="19" font-weight="normal" font-style="normal" font-family="Liberation Sans" fill="#5a5a5a" textLength="10.57" lengthAdjust="spacingAndGlyphs" stroke="#5a5a5a" stroke-width="0.15" >9</text>
<text x="1.12" y="739.01" font-size="19" font-weight="normal" font-style="normal" font-family="Liberation Sans" fill="#5a5a5a" textLength="10.57" lengthAdjust="spacingAndGlyphs" stroke="#5a5a5a" stroke-width="0.15" >0</text>
<text x="1.31" y="778.40" font-size="19" font-weight="normal" font-style="normal" font-family="Liberation Sans" fill="#5a5a5a" textLength="10.57" lengthAdjust="spacingAndGlyphs" stroke="#5a5a5a" stroke-width="0.15" >1</text>
<text x="1.31" y="817.79" font-size="19" font-weight="normal" font-style="normal" font-family="Liberation Sans" fill="#5a5a5a" textLength="10.57" lengthAdjust="spacingAndGlyphs" stroke="#5a5a5a" stroke-width="0.15" >2</text>
<text x="1.12" y="857.18" font-size="19" font-weight="normal" font-style="normal" font-family="Liberation Sans" fill="#5a5a5a" textLength="10.57" lengthAdjust="spacingAndGlyphs" stroke="#5a5a5a" stroke-width="0.15" >3</text>
<text x="0.93" y="887.97" font-size="19" font-weight="normal" font-style="normal" font-family="Liberation Sans" fill="#5a5a5a" textLength="10.57" lengthAdjust="spacingAndGlyphs" stroke="#5a5a5a" stroke-width="0.15" >4</text>
<text x="1.12" y="916.17" font-size="19" font-weight="normal" font-style="normal" font-family="Liberation Sans" fill="#5a5a5a" textLength="10.57" lengthAdjust="spacingAndGlyphs" stroke="#5a5a5a" stroke-width="0.15" >5</text>
<text x="1.12" y="944.37" font-size="19" font-weight="normal" font-style="normal" font-family="Liberation Sans" fill="#5a5a5a" textLength="10.57" lengthAdjust="spacingAndGlyphs" stroke="#5a5a5a" stroke-width="0.15" >6</text>
<text x="1.31" y="972.57" font-size="19" font-weight="normal" font-style="normal" font-family="Liberation Sans" fill="#1d6b3f" textLength="10.57" lengthAdjust="spacingAndGlyphs" stroke="#1d6b3f" stroke-width="0.15" >7</text>
<text x="1.12" y="1000.77" font-size="19" font-weight="normal" font-style="normal" font-family="Liberation Sans" fill="#5a5a5a" textLength="10.57" lengthAdjust="spacingAndGlyphs" stroke="#5a5a5a" stroke-width="0.15" >8</text>
<text x="1.31" y="1028.97" font-size="19" font-weight="normal" font-style="normal" font-family="Liberation Sans" fill="#5a5a5a" textLength="10.57" lengthAdjust="spacingAndGlyphs" stroke="#5a5a5a" stroke-width="0.15" >9</text>
<text x="1.12" y="1057.17" font-size="19" font-weight="normal" font-style="normal" font-family="Liberation Sans" fill="#5a5a5a" textLength="10.57" lengthAdjust="spacingAndGlyphs" stroke="#5a5a5a" stroke-width="0.15" >0</text>
<text x="1.31" y="1085.37" font-size="19" font-weight="normal" font-style="normal" font-family="Liberation Sans" fill="#5a5a5a" textLength="10.57" lengthAdjust="spacingAndGlyphs" stroke="#5a5a5a" stroke-width="0.15" >1</text>
<text x="1.31" y="1113.57" font-size="19" font-weight="normal" font-style="normal" font-family="Liberation Sans" fill="#5a5a5a" textLength="10.57" lengthAdjust="spacingAndGlyphs" stroke="#5a5a5a" stroke-width="0.15" >2</text>
<text x="1.12" y="1141.77" font-size="19" font-weight="normal" font-style="normal" font-family="Liberation Sans" fill="#5a5a5a" textLength="10.57" lengthAdjust="spacingAndGlyphs" stroke="#5a5a5a" stroke-width="0.15" >3</text>
<text x="0.93" y="1169.97" font-size="19" font-weight="normal" font-style="normal" font-family="Liberation Sans" fill="#5a5a5a" textLength="10.57" lengthAdjust="spacingAndGlyphs" stroke="#5a5a5a" stroke-width="0.15" >4</text>
<text x="1.12" y="1198.17" font-size="19" font-weight="normal" font-style="normal" font-family="Liberation Sans" fill="#5a5a5a" textLength="10.57" lengthAdjust="spacingAndGlyphs" stroke="#5a5a5a" stroke-width="0.15" >5</text>
<text x="1.12" y="1226.37" font-size="19" font-weight="normal" font-style="normal" font-family="Liberation Sans" fill="#5a5a5a" textLength="10.57" lengthAdjust="spacingAndGlyphs" stroke="#5a5a5a" stroke-width="0.15" >6</text>
<text x="27.84" y="384.50" font-size="26.3" font-weight="bold" font-style="normal" font-family="Liberation Sans" fill="#000" textLength="60.09" lengthAdjust="spacingAndGlyphs" stroke="#000" stroke-width="0.35" >Date</text>
<text x="227.86" y="384.50" font-size="26.3" font-weight="bold" font-style="normal" font-family="Liberation Sans" fill="#000" textLength="103.53" lengthAdjust="spacingAndGlyphs" stroke="#000" stroke-width="0.35" >Product</text>
<text x="430.97" y="384.50" font-size="26.3" font-weight="bold" font-style="normal" font-family="Liberation Sans" fill="#000" textLength="114.12" lengthAdjust="spacingAndGlyphs" stroke="#000" stroke-width="0.35" >Quantity</text>
<text x="565.99" y="384.50" font-size="26.3" font-weight="bold" font-style="normal" font-family="Liberation Sans" fill="#000" textLength="111.81" lengthAdjust="spacingAndGlyphs" stroke="#000" stroke-width="0.35" >Revenue</text>
<text x="701.11" y="384.50" font-size="26.3" font-weight="bold" font-style="normal" font-family="Liberation Sans" fill="#000" textLength="89.70" lengthAdjust="spacingAndGlyphs" stroke="#000" stroke-width="0.35" >Region</text>
<text x="28.65" y="423.89" font-size="26.8" font-weight="normal" font-style="normal" font-family="Liberation Sans" fill="#000" textLength="141.98" lengthAdjust="spacingAndGlyphs" stroke="#000" stroke-width="0.35" >01/06/2025</text>
<text x="230.50" y="423.89" font-size="26.8" font-weight="normal" font-style="normal" font-family="Liberation Sans" fill="#000" textLength="193.28" lengthAdjust="spacingAndGlyphs" stroke="#000" stroke-width="0.35" >Wireless Mouse</text>
<text x="526.81" y="423.89" font-size="26.8" font-weight="normal" font-style="normal" font-family="Liberation Sans" fill="#000" textLength="31.00" lengthAdjust="spacingAndGlyphs" stroke="#000" stroke-width="0.35" >45</text>
<text x="632.47" y="423.89" font-size="26.8" font-weight="normal" font-style="normal" font-family="Liberation Sans" fill="#000" textLength="59.94" lengthAdjust="spacingAndGlyphs" stroke="#000" stroke-width="0.35" >1125</text>
<text x="701.87" y="423.89" font-size="26.8" font-weight="normal" font-style="normal" font-family="Liberation Sans" fill="#000" textLength="50.77" lengthAdjust="spacingAndGlyphs" stroke="#000" stroke-width="0.35" >East</text>
<text x="28.65" y="463.28" font-size="26.8" font-weight="normal" font-style="normal" font-family="Liberation Sans" fill="#000" textLength="141.98" lengthAdjust="spacingAndGlyphs" stroke="#000" stroke-width="0.35" >01/06/2025</text>
<text x="228.68" y="463.28" font-size="26.8" font-weight="normal" font-style="normal" font-family="Liberation Sans" fill="#000" textLength="171.78" lengthAdjust="spacingAndGlyphs" stroke="#000" stroke-width="0.35" >USB Keyboard</text>
<text x="526.81" y="463.28" font-size="26.8" font-weight="normal" font-style="normal" font-family="Liberation Sans" fill="#000" textLength="31.00" lengthAdjust="spacingAndGlyphs" stroke="#000" stroke-width="0.35" >30</text>
<text x="645.90" y="463.28" font-size="26.8" font-weight="normal" font-style="normal" font-family="Liberation Sans" fill="#000" textLength="46.50" lengthAdjust="spacingAndGlyphs" stroke="#000" stroke-width="0.35" >750</text>
<text x="703.50" y="463.28" font-size="26.8" font-weight="normal" font-style="normal" font-family="Liberation Sans" fill="#000" textLength="59.94" lengthAdjust="spacingAndGlyphs" stroke="#000" stroke-width="0.35" >West</text>
<text x="28.65" y="502.67" font-size="26.8" font-weight="normal" font-style="normal" font-family="Liberation Sans" fill="#000" textLength="141.98" lengthAdjust="spacingAndGlyphs" stroke="#000" stroke-width="0.35" >01/06/2025</text>
<text x="228.24" y="502.67" font-size="26.8" font-weight="normal" font-style="normal" font-family="Liberation Sans" fill="#000" textLength="176.05" lengthAdjust="spacingAndGlyphs" stroke="#000" stroke-width="0.35" >Monitor Stand</text>
<text x="527.08" y="502.67" font-size="26.8" font-weight="normal" font-style="normal" font-family="Liberation Sans" fill="#000" textLength="31.00" lengthAdjust="spacingAndGlyphs" stroke="#000" stroke-width="0.35" >12</text>
<text x="645.90" y="502.67" font-size="26.8" font-weight="normal" font-style="normal" font-family="Liberation Sans" fill="#000" textLength="46.50" lengthAdjust="spacingAndGlyphs" stroke="#000" stroke-width="0.35" >480</text>
<text x="701.87" y="502.67" font-size="26.8" font-weight="normal" font-style="normal" font-family="Liberation Sans" fill="#000" textLength="50.77" lengthAdjust="spacingAndGlyphs" stroke="#000" stroke-width="0.35" >East</text>
<text x="28.65" y="542.06" font-size="26.8" font-weight="normal" font-style="normal" font-family="Liberation Sans" fill="#000" textLength="141.98" lengthAdjust="spacingAndGlyphs" stroke="#000" stroke-width="0.35" >01/07/2025</text>
<text x="230.50" y="542.06" font-size="26.8" font-weight="normal" font-style="normal" font-family="Liberation Sans" fill="#000" textLength="193.28" lengthAdjust="spacingAndGlyphs" stroke="#000" stroke-width="0.35" >Wireless Mouse</text>
<text x="526.81" y="542.06" font-size="26.8" font-weight="normal" font-style="normal" font-family="Liberation Sans" fill="#000" textLength="31.00" lengthAdjust="spacingAndGlyphs" stroke="#000" stroke-width="0.35" >38</text>
<text x="645.90" y="542.06" font-size="26.8" font-weight="normal" font-style="normal" font-family="Liberation Sans" fill="#000" textLength="46.50" lengthAdjust="spacingAndGlyphs" stroke="#000" stroke-width="0.35" >950</text>
<text x="701.95" y="542.06" font-size="26.8" font-weight="normal" font-style="normal" font-family="Liberation Sans" fill="#000" textLength="68.52" lengthAdjust="spacingAndGlyphs" stroke="#000" stroke-width="0.35" >South</text>
<text x="28.65" y="581.45" font-size="26.8" font-weight="normal" font-style="normal" font-family="Liberation Sans" fill="#000" textLength="141.98" lengthAdjust="spacingAndGlyphs" stroke="#000" stroke-width="0.35" >01/07/2025</text>
<text x="228.37" y="581.45" font-size="26.8" font-weight="normal" font-style="normal" font-family="Liberation Sans" fill="#000" textLength="134.59" lengthAdjust="spacingAndGlyphs" stroke="#000" stroke-width="0.35" >Desk Lamp</text>
<text x="526.81" y="581.45" font-size="26.8" font-weight="normal" font-style="normal" font-family="Liberation Sans" fill="#000" textLength="31.00" lengthAdjust="spacingAndGlyphs" stroke="#000" stroke-width="0.35" >25</text>
<text x="645.90" y="581.45" font-size="26.8" font-weight="normal" font-style="normal" font-family="Liberation Sans" fill="#000" textLength="46.50" lengthAdjust="spacingAndGlyphs" stroke="#000" stroke-width="0.35" >625</text>
<text x="701.70" y="581.45" font-size="26.8" font-weight="normal" font-style="normal" font-family="Liberation Sans" fill="#000" textLength="70.42" lengthAdjust="spacingAndGlyphs" stroke="#000" stroke-width="0.35" >North</text>
<text x="28.65" y="620.84" font-size="26.8" font-weight="normal" font-style="normal" font-family="Liberation Sans" fill="#000" textLength="141.98" lengthAdjust="spacingAndGlyphs" stroke="#000" stroke-width="0.35" >01/07/2025</text>
<text x="228.68" y="620.84" font-size="26.8" font-weight="normal" font-style="normal" font-family="Liberation Sans" fill="#000" textLength="171.78" lengthAdjust="spacingAndGlyphs" stroke="#000" stroke-width="0.35" >USB Keyboard</text>
<text x="527.08" y="620.84" font-size="26.8" font-weight="normal" font-style="normal" font-family="Liberation Sans" fill="#000" textLength="31.00" lengthAdjust="spacingAndGlyphs" stroke="#000" stroke-width="0.35" >42</text>
<text x="630.40" y="620.84" font-size="26.8" font-weight="normal" font-style="normal" font-family="Liberation Sans" fill="#000" textLength="62.00" lengthAdjust="spacingAndGlyphs" stroke="#000" stroke-width="0.35" >1050</text>
<text x="703.50" y="620.84" font-size="26.8" font-weight="normal" font-style="normal" font-family="Liberation Sans" fill="#000" textLength="59.94" lengthAdjust="spacingAndGlyphs" stroke="#000" stroke-width="0.35" >West</text>
<text x="28.65" y="660.23" font-size="26.8" font-weight="normal" font-style="normal" font-family="Liberation Sans" fill="#000" textLength="141.98" lengthAdjust="spacingAndGlyphs" stroke="#000" stroke-width="0.35" >01/08/2025</text>
<text x="228.24" y="660.23" font-size="26.8" font-weight="normal" font-style="normal" font-family="Liberation Sans" fill="#000" textLength="176.05" lengthAdjust="spacingAndGlyphs" stroke="#000" stroke-width="0.35" >Monitor Stand</text>
<text x="526.81" y="660.23" font-size="26.8" font-weight="normal" font-style="normal" font-family="Liberation Sans" fill="#000" textLength="31.00" lengthAdjust="spacingAndGlyphs" stroke="#000" stroke-width="0.35" >18</text>
<text x="645.90" y="660.23" font-size="26.8" font-weight="normal" font-style="normal" font-family="Liberation Sans" fill="#000" textLength="46.50" lengthAdjust="spacingAndGlyphs" stroke="#000" stroke-width="0.35" >720</text>
<text x="701.87" y="660.23" font-size="26.8" font-weight="normal" font-style="normal" font-family="Liberation Sans" fill="#000" textLength="50.77" lengthAdjust="spacingAndGlyphs" stroke="#000" stroke-width="0.35" >East</text>
<text x="28.65" y="699.62" font-size="26.8" font-weight="normal" font-style="normal" font-family="Liberation Sans" fill="#000" textLength="141.98" lengthAdjust="spacingAndGlyphs" stroke="#000" stroke-width="0.35" >01/08/2025</text>
<text x="228.37" y="699.62" font-size="26.8" font-weight="normal" font-style="normal" font-family="Liberation Sans" fill="#000" textLength="134.59" lengthAdjust="spacingAndGlyphs" stroke="#000" stroke-width="0.35" >Desk Lamp</text>
<text x="526.81" y="699.62" font-size="26.8" font-weight="normal" font-style="normal" font-family="Liberation Sans" fill="#000" textLength="31.00" lengthAdjust="spacingAndGlyphs" stroke="#000" stroke-width="0.35" >15</text>
<text x="645.90" y="699.62" font-size="26.8" font-weight="normal" font-style="normal" font-family="Liberation Sans" fill="#000" textLength="46.50" lengthAdjust="spacingAndGlyphs" stroke="#000" stroke-width="0.35" >375</text>
<text x="701.95" y="699.62" font-size="26.8" font-weight="normal" font-style="normal" font-family="Liberation Sans" fill="#000" textLength="68.52" lengthAdjust="spacingAndGlyphs" stroke="#000" stroke-width="0.35" >South</text>
<text x="28.65" y="739.01" font-size="26.8" font-weight="normal" font-style="normal" font-family="Liberation Sans" fill="#000" textLength="141.98" lengthAdjust="spacingAndGlyphs" stroke="#000" stroke-width="0.35" >01/08/2025</text>
<text x="230.50" y="739.01" font-size="26.8" font-weight="normal" font-style="normal" font-family="Liberation Sans" fill="#000" textLength="193.28" lengthAdjust="spacingAndGlyphs" stroke="#000" stroke-width="0.35" >Wireless Mouse</text>
<text x="526.81" y="739.01" font-size="26.8" font-weight="normal" font-style="normal" font-family="Liberation Sans" fill="#000" textLength="31.00" lengthAdjust="spacingAndGlyphs" stroke="#000" stroke-width="0.35" >50</text>
<text x="630.40" y="739.01" font-size="26.8" font-weight="normal" font-style="normal" font-family="Liberation Sans" fill="#000" textLength="62.00" lengthAdjust="spacingAndGlyphs" stroke="#000" stroke-width="0.35" >1250</text>
<text x="701.70" y="739.01" font-size="26.8" font-weight="normal" font-style="normal" font-family="Liberation Sans" fill="#000" textLength="70.42" lengthAdjust="spacingAndGlyphs" stroke="#000" stroke-width="0.35" >North</text>
<text x="28.65" y="778.40" font-size="26.8" font-weight="normal" font-style="normal" font-family="Liberation Sans" fill="#000" textLength="141.98" lengthAdjust="spacingAndGlyphs" stroke="#000" stroke-width="0.35" >01/09/2025</text>
<text x="228.68" y="778.40" font-size="26.8" font-weight="normal" font-style="normal" font-family="Liberation Sans" fill="#000" textLength="171.78" lengthAdjust="spacingAndGlyphs" stroke="#000" stroke-width="0.35" >USB Keyboard</text>
<text x="526.81" y="778.40" font-size="26.8" font-weight="normal" font-style="normal" font-family="Liberation Sans" fill="#000" textLength="31.00" lengthAdjust="spacingAndGlyphs" stroke="#000" stroke-width="0.35" >35</text>
<text x="645.90" y="778.40" font-size="26.8" font-weight="normal" font-style="normal" font-family="Liberation Sans" fill="#000" textLength="46.50" lengthAdjust="spacingAndGlyphs" stroke="#000" stroke-width="0.35" >875</text>
<text x="701.87" y="778.40" font-size="26.8" font-weight="normal" font-style="normal" font-family="Liberation Sans" fill="#000" textLength="50.77" lengthAdjust="spacingAndGlyphs" stroke="#000" stroke-width="0.35" >East</text>
<text x="28.65" y="817.79" font-size="26.8" font-weight="normal" font-style="normal" font-family="Liberation Sans" fill="#000" textLength="141.98" lengthAdjust="spacingAndGlyphs" stroke="#000" stroke-width="0.35" >01/09/2025</text>
<text x="228.37" y="817.79" font-size="26.8" font-weight="normal" font-style="normal" font-family="Liberation Sans" fill="#000" textLength="134.59" lengthAdjust="spacingAndGlyphs" stroke="#000" stroke-width="0.35" >Desk Lamp</text>
<text x="526.81" y="817.79" font-size="26.8" font-weight="normal" font-style="normal" font-family="Liberation Sans" fill="#000" textLength="31.00" lengthAdjust="spacingAndGlyphs" stroke="#000" stroke-width="0.35" >20</text>
<text x="645.90" y="817.79" font-size="26.8" font-weight="normal" font-style="normal" font-family="Liberation Sans" fill="#000" textLength="46.50" lengthAdjust="spacingAndGlyphs" stroke="#000" stroke-width="0.35" >500</text>
<text x="703.50" y="817.79" font-size="26.8" font-weight="normal" font-style="normal" font-family="Liberation Sans" fill="#000" textLength="59.94" lengthAdjust="spacingAndGlyphs" stroke="#000" stroke-width="0.35" >West</text>
<text x="28.65" y="857.18" font-size="26.8" font-weight="normal" font-style="normal" font-family="Liberation Sans" fill="#000" textLength="141.98" lengthAdjust="spacingAndGlyphs" stroke="#000" stroke-width="0.35" >01/09/2025</text>
<text x="228.24" y="857.18" font-size="26.8" font-weight="normal" font-style="normal" font-family="Liberation Sans" fill="#000" textLength="176.05" lengthAdjust="spacingAndGlyphs" stroke="#000" stroke-width="0.35" >Monitor Stand</text>
<text x="527.08" y="857.18" font-size="26.8" font-weight="normal" font-style="normal" font-family="Liberation Sans" fill="#000" textLength="31.00" lengthAdjust="spacingAndGlyphs" stroke="#000" stroke-width="0.35" >22</text>
<text x="645.90" y="857.18" font-size="26.8" font-weight="normal" font-style="normal" font-family="Liberation Sans" fill="#000" textLength="46.50" lengthAdjust="spacingAndGlyphs" stroke="#000" stroke-width="0.35" >880</text>
<text x="701.95" y="857.18" font-size="26.8" font-weight="normal" font-style="normal" font-family="Liberation Sans" fill="#000" textLength="68.52" lengthAdjust="spacingAndGlyphs" stroke="#000" stroke-width="0.35" >South</text>
<text x="1.97" y="97.50" font-size="24.7" font-weight="bold" font-style="normal" font-family="Liberation Sans" fill="#6c6c6c" textLength="70.69" lengthAdjust="spacingAndGlyphs" stroke="#6c6c6c" stroke-width="0.35" >Home</text>
<text x="114.86" y="97.50" font-size="24.7" font-weight="normal" font-style="normal" font-family="Liberation Sans" fill="#6c6c6c" textLength="67.88" lengthAdjust="spacingAndGlyphs" stroke="#6c6c6c" stroke-width="0.35" >Insert</text>
<text x="229.95" y="97.50" font-size="24.7" font-weight="normal" font-style="normal" font-family="Liberation Sans" fill="#6c6c6c" textLength="144.00" lengthAdjust="spacingAndGlyphs" stroke="#6c6c6c" stroke-width="0.35" >Page Layout</text>
<text x="421.62" y="97.50" font-size="24.7" font-weight="normal" font-style="normal" font-family="Liberation Sans" fill="#6c6c6c" textLength="108.57" lengthAdjust="spacingAndGlyphs" stroke="#6c6c6c" stroke-width="0.35" >Formulas</text>
<text x="577.16" y="97.50" font-size="24.7" font-weight="normal" font-style="normal" font-family="Liberation Sans" fill="#6c6c6c" textLength="53.94" lengthAdjust="spacingAndGlyphs" stroke="#6c6c6c" stroke-width="0.35" >Data</text>
<text x="675.59" y="97.50" font-size="24.7" font-weight="normal" font-style="normal" font-family="Liberation Sans" fill="#6c6c6c" textLength="82.21" lengthAdjust="spacingAndGlyphs" stroke="#6c6c6c" stroke-width="0.35" >Review</text>
<text x="804.80" y="97.50" font-size="24.7" font-weight="normal" font-style="normal" font-family="Liberation Sans" fill="#6c6c6c" textLength="54.20" lengthAdjust="spacingAndGlyphs" stroke="#6c6c6c" stroke-width="0.35" >View</text>
<text x="1303.71" y="33.60" font-size="25" font-weight="bold" font-style="normal" font-family="Liberation Sans" fill="#ffffff" textLength="226.92" lengthAdjust="spacingAndGlyphs" stroke="#ffffff" stroke-width="0.35" >sample-sales-data</text>
<text x="18.36" y="217.50" font-size="19.6" font-weight="normal" font-style="normal" font-family="Liberation Sans" fill="#555555" textLength="52.38" lengthAdjust="spacingAndGlyphs" stroke="#555555" stroke-width="0.35" >Paste</text>
<text x="207.80" y="165.00" font-size="23" font-weight="normal" font-style="normal" font-family="Liberation Sans" fill="#1a1a1a" textLength="145.47" lengthAdjust="spacingAndGlyphs" stroke="#1a1a1a" stroke-width="0.35" >Calibri (Body)</text>
<text x="475.56" y="165.00" font-size="23" font-weight="normal" font-style="normal" font-family="Liberation Sans" fill="#1a1a1a" textLength="21.39" lengthAdjust="spacingAndGlyphs" stroke="#1a1a1a" stroke-width="0.35" >11</text>
<text x="1278.82" y="165.00" font-size="23" font-weight="normal" font-style="normal" font-family="Liberation Sans" fill="#1a1a1a" textLength="83.64" lengthAdjust="spacingAndGlyphs" stroke="#1a1a1a" stroke-width="0.35" >General</text>
<text x="1054.00" y="165.00" font-size="19.6" font-weight="normal" font-style="normal" font-family="Liberation Sans" fill="#555555" textLength="92.96" lengthAdjust="spacingAndGlyphs" stroke="#555555" stroke-width="0.35" >Wrap Text</text>
<text x="1052.31" y="225.00" font-size="19.6" font-weight="normal" font-style="normal" font-family="Liberation Sans" fill="#555555" textLength="149.46" lengthAdjust="spacingAndGlyphs" stroke="#555555" stroke-width="0.35" >Merge &amp; Centre</text>
<text x="1601.94" y="217.50" font-size="19.6" font-weight="normal" font-style="normal" font-family="Liberation Sans" fill="#555555" textLength="106.38" lengthAdjust="spacingAndGlyphs" stroke="#555555" stroke-width="0.35" >Conditional</text>
<text x="1603.26" y="239.50" font-size="19.6" font-weight="normal" font-style="normal" font-family="Liberation Sans" fill="#555555" textLength="103.96" lengthAdjust="spacingAndGlyphs" stroke="#555555" stroke-width="0.35" >Formatting</text>
<text x="1726.29" y="217.50" font-size="19.6" font-weight="normal" font-style="normal" font-family="Liberation Sans" fill="#555555" textLength="67.66" lengthAdjust="spacingAndGlyphs" stroke="#555555" stroke-width="0.35" >Format</text>
<text x="1723.17" y="239.50" font-size="19.6" font-weight="normal" font-style="normal" font-family="Liberation Sans" fill="#555555" textLength="77.59" lengthAdjust="spacingAndGlyphs" stroke="#555555" stroke-width="0.35" >as Table</text>
<text x="1836.94" y="217.50" font-size="19.6" font-weight="normal" font-style="normal" font-family="Liberation Sans" fill="#555555" textLength="36.37" lengthAdjust="spacingAndGlyphs" stroke="#555555" stroke-width="0.35" >Cell</text>
<text x="1825.14" y="239.50" font-size="19.6" font-weight="normal" font-style="normal" font-family="Liberation Sans" fill="#555555" textLength="58.50" lengthAdjust="spacingAndGlyphs" stroke="#555555" stroke-width="0.35" >Styles</text>
<text x="1956.24" y="217.50" font-size="19.6" font-weight="normal" font-style="normal" font-family="Liberation Sans" fill="#555555" textLength="49.02" lengthAdjust="spacingAndGlyphs" stroke="#555555" stroke-width="0.35" >Insert</text>
<text x="-0.21" y="290.00" font-size="21.7" font-weight="normal" font-style="normal" font-family="Liberation Sans" fill="#1a1a1a" textLength="34.19" lengthAdjust="spacingAndGlyphs" stroke="#1a1a1a" stroke-width="0.35" >J17</text>
</svg>
<div id="shadow"></div>
<svg width="1999" height="1207" viewBox="0 0 1999 1207">
<rect x="1073.7" y="249.5" width="651" height="729" rx="31" fill="#ffffff"/>
<rect x="1074" y="307.8" width="650" height="1.2" fill="#e6e6e6"/>
<rect x="1108.7" y="390.2" width="580" height="49.5" rx="11" fill="#ffffff" stroke="#88b898" stroke-width="6"/>
<rect x="1279.2" y="401" width="2.6" height="28" fill="#4e9a6b" rx="1"/>
<rect x="1111.3" y="493.8" width="576" height="44.2" rx="9" fill="#ebebeb"/>
<path d="M1655.5 514 L1661 508.5 L1666.5 514 M1655.5 519.5 L1661 525 L1666.5 519.5" fill="none" stroke="#333" stroke-width="2.4" stroke-linecap="round" stroke-linejoin="round"/>
<rect x="1308.8" y="596" width="75.5" height="46.5" rx="9" fill="#ffffff" stroke="#f0f0f0" stroke-width="1.2"/>
<rect x="1096" y="665" width="605" height="1.2" fill="#ececec"/>
<rect x="1111" y="731" width="576" height="136.5" rx="10" fill="#ffffff" stroke="#f0f0f0" stroke-width="1.2"/>
<rect x="1417.8" y="896" width="123" height="44" rx="10" fill="#ebebeb"/>
<rect x="1563.7" y="896" width="123.5" height="44" rx="10" fill="#137c43"/>
<text x="1110.99" y="288.75" font-size="24" font-weight="bold" font-style="normal" font-family="Liberation Sans" fill="#505050" textLength="167.79" lengthAdjust="spacingAndGlyphs" stroke="#505050" stroke-width="0.35" >Record Macro</text>
<text x="1110.35" y="371.50" font-size="23.5" font-weight="normal" font-style="normal" font-family="Liberation Sans" fill="#2b2b2b" textLength="149.29" lengthAdjust="spacingAndGlyphs" stroke="#2b2b2b" stroke-width="0.35" >Macro name:</text>
<text x="1121.98" y="424.00" font-size="23.5" font-weight="normal" font-style="normal" font-family="Liberation Sans" fill="#2b2b2b" textLength="155.97" lengthAdjust="spacingAndGlyphs" stroke="#2b2b2b" stroke-width="0.35" >FormatReport</text>
<text x="1111.37" y="476.70" font-size="23.5" font-weight="normal" font-style="normal" font-family="Liberation Sans" fill="#2b2b2b" textLength="173.88" lengthAdjust="spacingAndGlyphs" stroke="#2b2b2b" stroke-width="0.35" >Store macro in:</text>
<text x="1134.19" y="524.80" font-size="23.5" font-weight="normal" font-style="normal" font-family="Liberation Sans" fill="#2b2b2b" textLength="168.55" lengthAdjust="spacingAndGlyphs" stroke="#2b2b2b" stroke-width="0.35" >This Workbook</text>
<text x="1110.96" y="584.50" font-size="23.5" font-weight="normal" font-style="normal" font-family="Liberation Sans" fill="#2b2b2b" textLength="152.34" lengthAdjust="spacingAndGlyphs" stroke="#2b2b2b" stroke-width="0.35" >Shortcut key:</text>
<text x="1132.97" y="628.70" font-size="23.5" font-weight="normal" font-style="normal" font-family="Liberation Sans" fill="#2b2b2b" textLength="159.86" lengthAdjust="spacingAndGlyphs" stroke="#2b2b2b" stroke-width="0.35" >Option+Cmd+</text>
<text x="1109.88" y="711.50" font-size="23.5" font-weight="normal" font-style="normal" font-family="Liberation Sans" fill="#2b2b2b" textLength="140.05" lengthAdjust="spacingAndGlyphs" stroke="#2b2b2b" stroke-width="0.35" >Description:</text>
<text x="1438.72" y="927.40" font-size="23.5" font-weight="normal" font-style="normal" font-family="Liberation Sans" fill="#2b2b2b" textLength="79.88" lengthAdjust="spacingAndGlyphs" stroke="#2b2b2b" stroke-width="0.35" >Cancel</text>
<text x="1608.06" y="927.40" font-size="23.5" font-weight="normal" font-style="normal" font-family="Liberation Sans" fill="#ffffff" textLength="34.11" lengthAdjust="spacingAndGlyphs" stroke="#ffffff" stroke-width="0.35" >OK</text>
</svg>
<svg width="1999" height="1207" viewBox="0 0 1999 1207"><rect x="845.3" y="204.9" width="921" height="468.4" fill="none" stroke="#f02a04" stroke-width="4.8"/></svg>
</body></html>
